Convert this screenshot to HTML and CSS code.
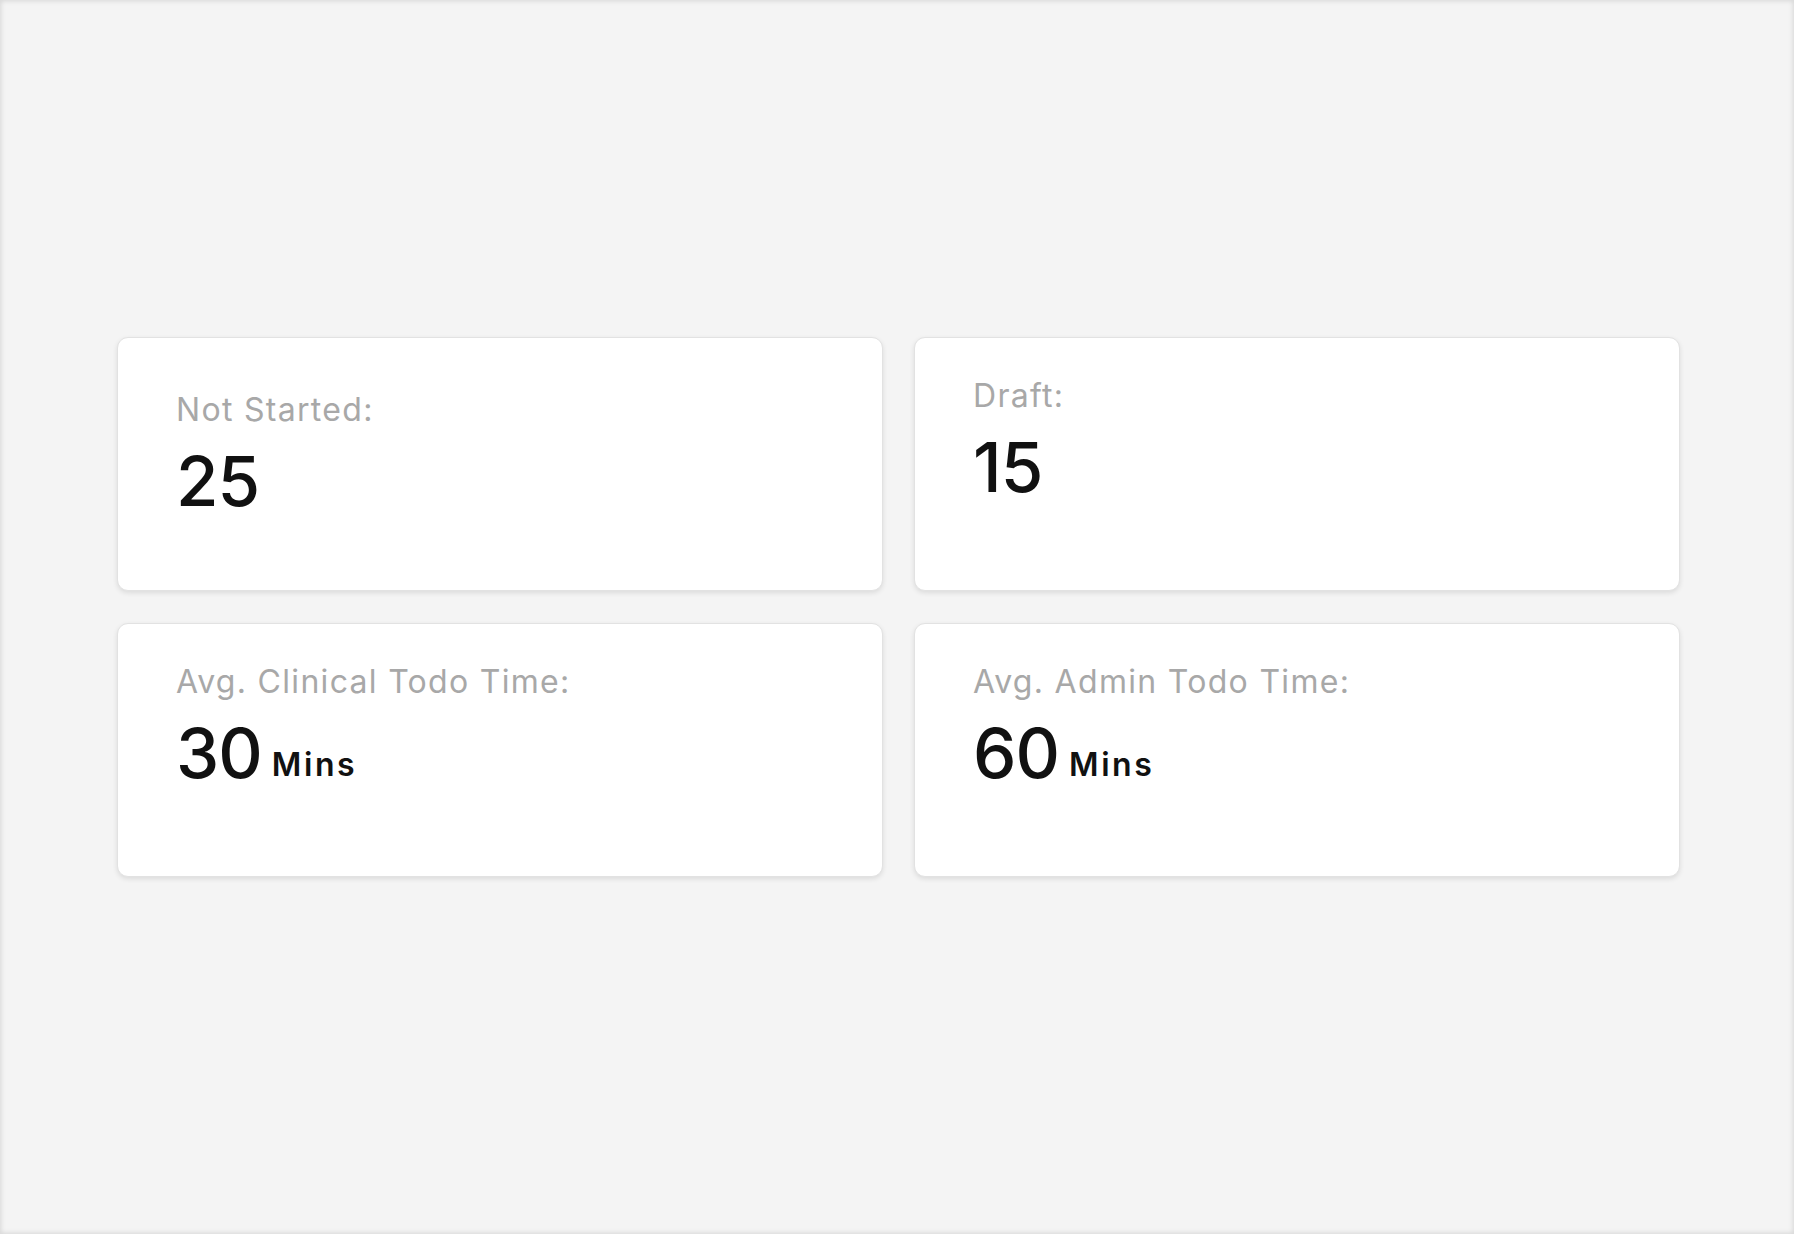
FILE: index.html
```html
<!DOCTYPE html>
<html lang="en">
<head>
<meta charset="utf-8">
<title>Todo Stats</title>
<link rel="stylesheet" href="styles.css">
</head>
<body>
<main class="page">
  <section class="stats">
    <div class="card card-first">
      <div class="label">Not Started:</div>
      <div class="value">25</div>
    </div>
    <div class="card">
      <div class="label">Draft:</div>
      <div class="value">15</div>
    </div>
    <div class="card">
      <div class="label">Avg. Clinical Todo Time:</div>
      <div class="value">30<span class="unit">Mins</span></div>
    </div>
    <div class="card">
      <div class="label">Avg. Admin Todo Time:</div>
      <div class="value">60<span class="unit">Mins</span></div>
    </div>
  </section>
</main>
</body>
</html>
```

FILE: styles.css
```css
html, body {
  margin: 0;
  padding: 0;
}

body {
  background: #f4f4f4;
  font-family: Inter, "Open Sans", "Liberation Sans", sans-serif;
}

.page {
  height: 1234px;
  box-sizing: border-box;
  box-shadow: inset 0 0 5px 1px rgba(0, 0, 0, 0.12);
  padding-top: 337px;
  padding-left: 117px;
}

.stats {
  display: grid;
  grid-template-columns: 766px 766px;
  grid-auto-rows: 254px;
  column-gap: 31px;
  row-gap: 32px;
}

.card {
  background: #ffffff;
  border-radius: 11px;
  border: 1px solid #e2e2e2;
  box-shadow: 0 2px 5px rgba(0, 0, 0, 0.10);
  box-sizing: border-box;
  padding: 39px 58px 0;
}

.card-first {
  padding-top: 53px;
}

.label {
  font-size: 32px;
  line-height: 38px;
  letter-spacing: 1.3px;
  color: #a8a8a8;
  font-weight: 400;
}

.value {
  margin-top: 11px;
  font-size: 69px;
  line-height: 83px;
  font-weight: 500;
  color: #111111;
  letter-spacing: -1px;
}

.unit {
  font-size: 32px;
  font-weight: 600;
  margin-left: 10px;
  letter-spacing: 2.6px;
  vertical-align: 2px;
}
```
